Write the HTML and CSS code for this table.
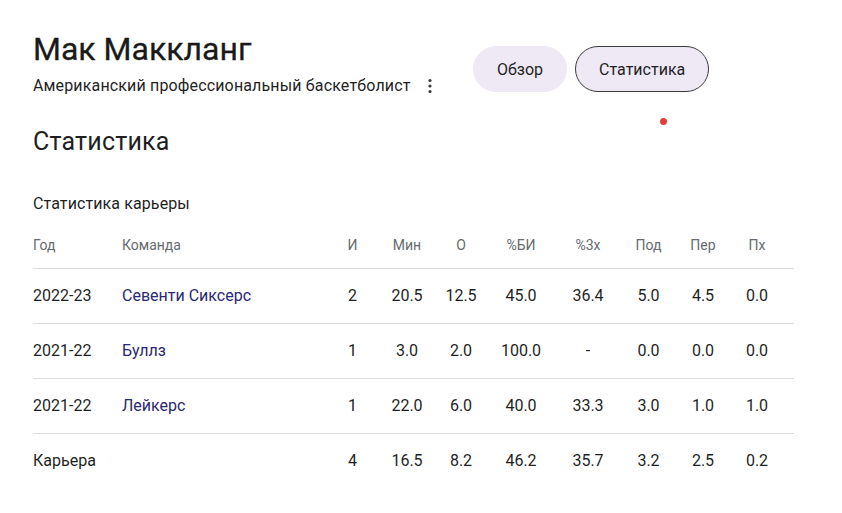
FILE: index.html
```html
<!DOCTYPE html>
<html lang="ru">
<head>
<meta charset="utf-8">
<link rel="stylesheet" href="styles.css">
</head>
<body>
<div class="page">
  <header class="top">
    <div class="ident">
      <h1 class="name">Мак Маккланг</h1>
      <div class="sub">
        <span>Американский профессиональный баскетболист</span>
        <svg class="more" width="6" height="16" viewBox="0 0 6 16"><circle cx="3" cy="2.5" r="1.6" fill="#3c3c3c"/><circle cx="3" cy="8" r="1.6" fill="#3c3c3c"/><circle cx="3" cy="13.5" r="1.6" fill="#3c3c3c"/></svg>
      </div>
    </div>
    <nav class="tabs">
      <button class="chip">Обзор</button>
      <button class="chip chip-active">Статистика</button>
      <span class="dot"></span>
    </nav>
  </header>
  <h2 class="section">Статистика</h2>
  <div class="caption">Статистика карьеры</div>
  <table class="stats">
    <colgroup>
      <col class="c-year"><col class="c-team"><col class="c-g"><col class="c-min"><col class="c-o"><col class="c-fg"><col class="c-3p"><col class="c-reb"><col class="c-ast"><col class="c-blk">
    </colgroup>
    <thead>
      <tr><th class="l">Год</th><th class="l">Команда</th><th>И</th><th>Мин</th><th>О</th><th>%БИ</th><th>%3х</th><th>Под</th><th>Пер</th><th class="last">Пх</th></tr>
    </thead>
    <tbody>
      <tr><td class="l">2022-23</td><td class="l team">Севенти Сиксерс</td><td>2</td><td>20.5</td><td>12.5</td><td>45.0</td><td>36.4</td><td>5.0</td><td>4.5</td><td class="last">0.0</td></tr>
      <tr><td class="l">2021-22</td><td class="l team">Буллз</td><td>1</td><td>3.0</td><td>2.0</td><td>100.0</td><td>-</td><td>0.0</td><td>0.0</td><td class="last">0.0</td></tr>
      <tr><td class="l">2021-22</td><td class="l team">Лейкерс</td><td>1</td><td>22.0</td><td>6.0</td><td>40.0</td><td>33.3</td><td>3.0</td><td>1.0</td><td class="last">1.0</td></tr>
      <tr class="total"><td class="l">Карьера</td><td class="l"></td><td>4</td><td>16.5</td><td>8.2</td><td>46.2</td><td>35.7</td><td>3.2</td><td>2.5</td><td class="last">0.2</td></tr>
    </tbody>
  </table>
</div>
</body>
</html>
```
FILE: styles.css
```css
* { box-sizing: border-box; }
html, body { margin: 0; padding: 0; background: #fff; }
body {
  font-family: Roboto, "Noto Sans", sans-serif;
  color: #1f1f1f;
}
.page {
  padding: 28px 0 0 33px;
  width: 842px;
}
.top {
  display: flex;
  align-items: flex-start;
}
.ident {
  width: 440px;
}
.name {
  margin: 0;
  font-size: 32px;
  font-weight: 400;
  line-height: 42px;
  color: #1a1a1a;
  -webkit-text-stroke: 0.3px #1a1a1a;
}
.sub {
  display: flex;
  align-items: center;
  gap: 16px;
  margin-top: 4px;
  font-size: 16px;
  line-height: 24px;
  letter-spacing: 0.15px;
  color: #1f1f1f;
}
.more { display: block; }
.tabs {
  position: relative;
  display: flex;
  gap: 8px;
  margin-top: 18px;
}
.chip {
  height: 46px;
  padding: 0 23px;
  border-radius: 23px;
  border: 1px solid #efe9f6;
  background: #efe9f6;
  font-family: Roboto, sans-serif;
  font-size: 16px;
  color: #1f1f1f;
}
.chip-active {
  border-color: #3b3b3b;
}
.dot {
  position: absolute;
  left: 187px;
  top: 72px;
  width: 7px;
  height: 7px;
  border-radius: 50%;
  background: #e0403a;
}
.section {
  margin: 28px 0 0;
  font-size: 25px;
  font-weight: 400;
  line-height: 32px;
  letter-spacing: 0.2px;
  color: #1f1f1f;
}
.caption {
  margin-top: 35px;
  font-size: 16px;
  line-height: 22px;
  letter-spacing: 0.1px;
  color: #1f1f1f;
}
.stats {
  margin-top: 7px;
  border-collapse: collapse;
  table-layout: fixed;
  width: 761px;
}
.c-year { width: 89px; }
.c-team { width: 203px; }
.c-g { width: 55px; }
.c-min { width: 54px; }
.c-o { width: 54px; }
.c-fg { width: 66px; }
.c-3p { width: 68px; }
.c-reb { width: 53px; }
.c-ast { width: 56px; }
.c-blk { width: 63px; }
.stats th, .stats td {
  padding: 0;
  text-align: center;
  white-space: nowrap;
}
.stats th {
  height: 46px;
  font-size: 14px;
  font-weight: 400;
  color: #666a6e;
  border-bottom: 1px solid #dadce0;
}
.stats td {
  height: 55px;
  font-size: 16px;
  color: #1f1f1f;
  border-bottom: 1px solid #dadce0;
}
.stats tr.total td { border-bottom: none; }
.stats .l { text-align: left; }
.stats .last { padding-right: 11px; }
.team { color: #2a2872 !important; }
```
